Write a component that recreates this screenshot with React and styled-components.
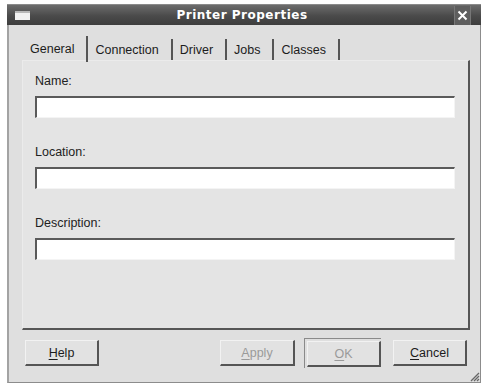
import { createGlobalStyle } from "styled-components";
import styled from "styled-components";

const GlobalStyle = createGlobalStyle`
  html, body {
    margin: 0;
    padding: 0;
    background: #ffffff;
  }
  body {
    font-family: "Liberation Sans", Arial, sans-serif;
  }
`;

// window frame
const Frame = styled.div`
  margin: 4px 0 0 7px;
  width: 474px;
  height: 379px;
  display: flex;
  flex-direction: column;
`;

const TitleBar = styled.div`
  height: 21px;
  flex: none;
  display: flex;
  align-items: center;
  padding: 0 10px 0 8px;
  background: linear-gradient(#6c6c6c, #4a4a4a 55%, #3e3e3e);
  border-top: 1px solid #8a8a8a;
  box-sizing: border-box;
`;

const WinIcon = styled.div`
  width: 15px;
  height: 9px;
  box-sizing: border-box;
  background: #f2f2f2;
  border-top: 2px solid #b8b8b8;
`;

const Title = styled.div`
  flex: 1;
  text-align: center;
  color: #ffffff;
  font-family: "DejaVu Sans", sans-serif;
  font-weight: bold;
  font-size: 12px;
  letter-spacing: 0.5px;
`;

const CloseBox = styled.div`
  width: 17px;
  height: 19px;
  display: flex;
  align-items: center;
  justify-content: center;
  background: #5e5e5e;
  border-left: 1px solid #777;
  border-right: 1px solid #777;
  box-sizing: border-box;
`;

const Body = styled.div`
  position: relative;
  flex: 1;
  display: flex;
  flex-direction: column;
  background: #dfdfdf;
  border-left: 2px solid #a3a3a3;
  border-right: 1px solid #8c8c8c;
  border-bottom: 1px solid #8c8c8c;
  padding: 11px 10px 0 13px;
`;

// notebook tabs
const TabStrip = styled.div`
  display: flex;
  align-items: flex-end;
  height: 24px;
`;

const Tab = styled.div`
  height: ${(p) => (p.$active ? "26px" : "21px")};
  margin-bottom: ${(p) => (p.$active ? "-2px" : "0")};
  padding: 0 12px 0 ${(p) => (p.$active ? "8px" : "7px")};
  display: flex;
  align-items: center;
  box-sizing: border-box;
  border-right: 2px solid #555;
  font-size: 12.5px;
  color: #1c1c1c;
  position: relative;
`;

const Panel = styled.div`
  height: 270px;
  box-sizing: border-box;
  background: #e4e4e4;
  border-top: 1px solid #ebebeb;
  border-left: 1px solid #ebebeb;
  border-right: 2px solid #565656;
  border-bottom: 2px solid #565656;
  padding: 12px 13px 0 12px;
  display: flex;
  flex-direction: column;
  gap: 26px;
`;

const Field = styled.div`
  display: flex;
  flex-direction: column;
`;

const Label = styled.div`
  font-size: 12.5px;
  line-height: 16px;
  color: #222;
  margin-bottom: 7px;
`;

const Entry = styled.div`
  height: 22px;
  box-sizing: border-box;
  background: #ffffff;
  border-top: 2px solid #5a5a5a;
  border-left: 2px solid #5a5a5a;
  border-right: 1px solid #f4f4f4;
  border-bottom: 1px solid #f4f4f4;
`;

// dialog buttons
const ButtonRow = styled.div`
  display: flex;
  align-items: center;
  height: 30px;
  margin-top: 8px;
  padding: 0 3px;
`;

const Spacer = styled.div`
  flex: 1;
`;

const Button = styled.div`
  width: ${(p) => p.$w}px;
  height: 26px;
  margin-left: ${(p) => p.$gap || 0}px;
  box-sizing: border-box;
  display: flex;
  align-items: center;
  justify-content: center;
  font-size: 12.5px;
  color: ${(p) => (p.$disabled ? "#9a9a9a" : "#1c1c1c")};
  background: #e2e2e2;
  border-top: 1px solid #f2f2f2;
  border-left: 1px solid #f2f2f2;
  border-right: 2px solid #555;
  border-bottom: 2px solid #555;

  u {
    text-underline-offset: 2px;
  }
`;

const DefaultFrame = styled.div`
  margin-left: ${(p) => p.$gap}px;
  height: 30px;
  box-sizing: border-box;
  border-top: 1px solid #8a8a8a;
  border-left: 1px solid #8a8a8a;
  padding: 2px 0 1px 2px;
  display: flex;
`;

const Grip = styled.svg`
  position: absolute;
  right: 0;
  bottom: 0;
`;

function Tabs() {
  const names = ["General", "Connection", "Driver", "Jobs", "Classes"];
  return (
    <TabStrip>
      {names.map((n, i) => (
        <Tab key={n} $active={i === 0}>
          {n}
        </Tab>
      ))}
    </TabStrip>
  );
}

function App() {
  const fields = ["Name:", "Location:", "Description:"];
  return (
    <>
      <GlobalStyle />
      <Frame>
        <TitleBar>
          <WinIcon />
          <Title>Printer Properties</Title>
          <CloseBox>
            <svg width="11" height="11" viewBox="0 0 11 11">
              <path d="M1.5 1.5 L9.5 9.5 M9.5 1.5 L1.5 9.5" stroke="#fff" strokeWidth="2" />
            </svg>
          </CloseBox>
        </TitleBar>
        <Body>
          <Tabs />
          <Panel>
            {fields.map((f) => (
              <Field key={f}>
                <Label>{f}</Label>
                <Entry />
              </Field>
            ))}
          </Panel>
          <ButtonRow>
            <Button $w={74}>
              <u>H</u>elp
            </Button>
            <Spacer />
            <Button $w={75} $disabled>
              <u>A</u>pply
            </Button>
            <DefaultFrame $gap={9}>
              <Button $w={74} $disabled>
                <u>O</u>K
              </Button>
            </DefaultFrame>
            <Button $w={74} $gap={12}>
              <u>C</u>ancel
            </Button>
          </ButtonRow>
          <Grip width="12" height="12" viewBox="0 0 12 12">
            <path d="M11 3 L3 11 M11 6 L6 11 M11 9 L9 11" stroke="#666" strokeWidth="1.3" />
          </Grip>
        </Body>
      </Frame>
    </>
  );
}

export default App;
